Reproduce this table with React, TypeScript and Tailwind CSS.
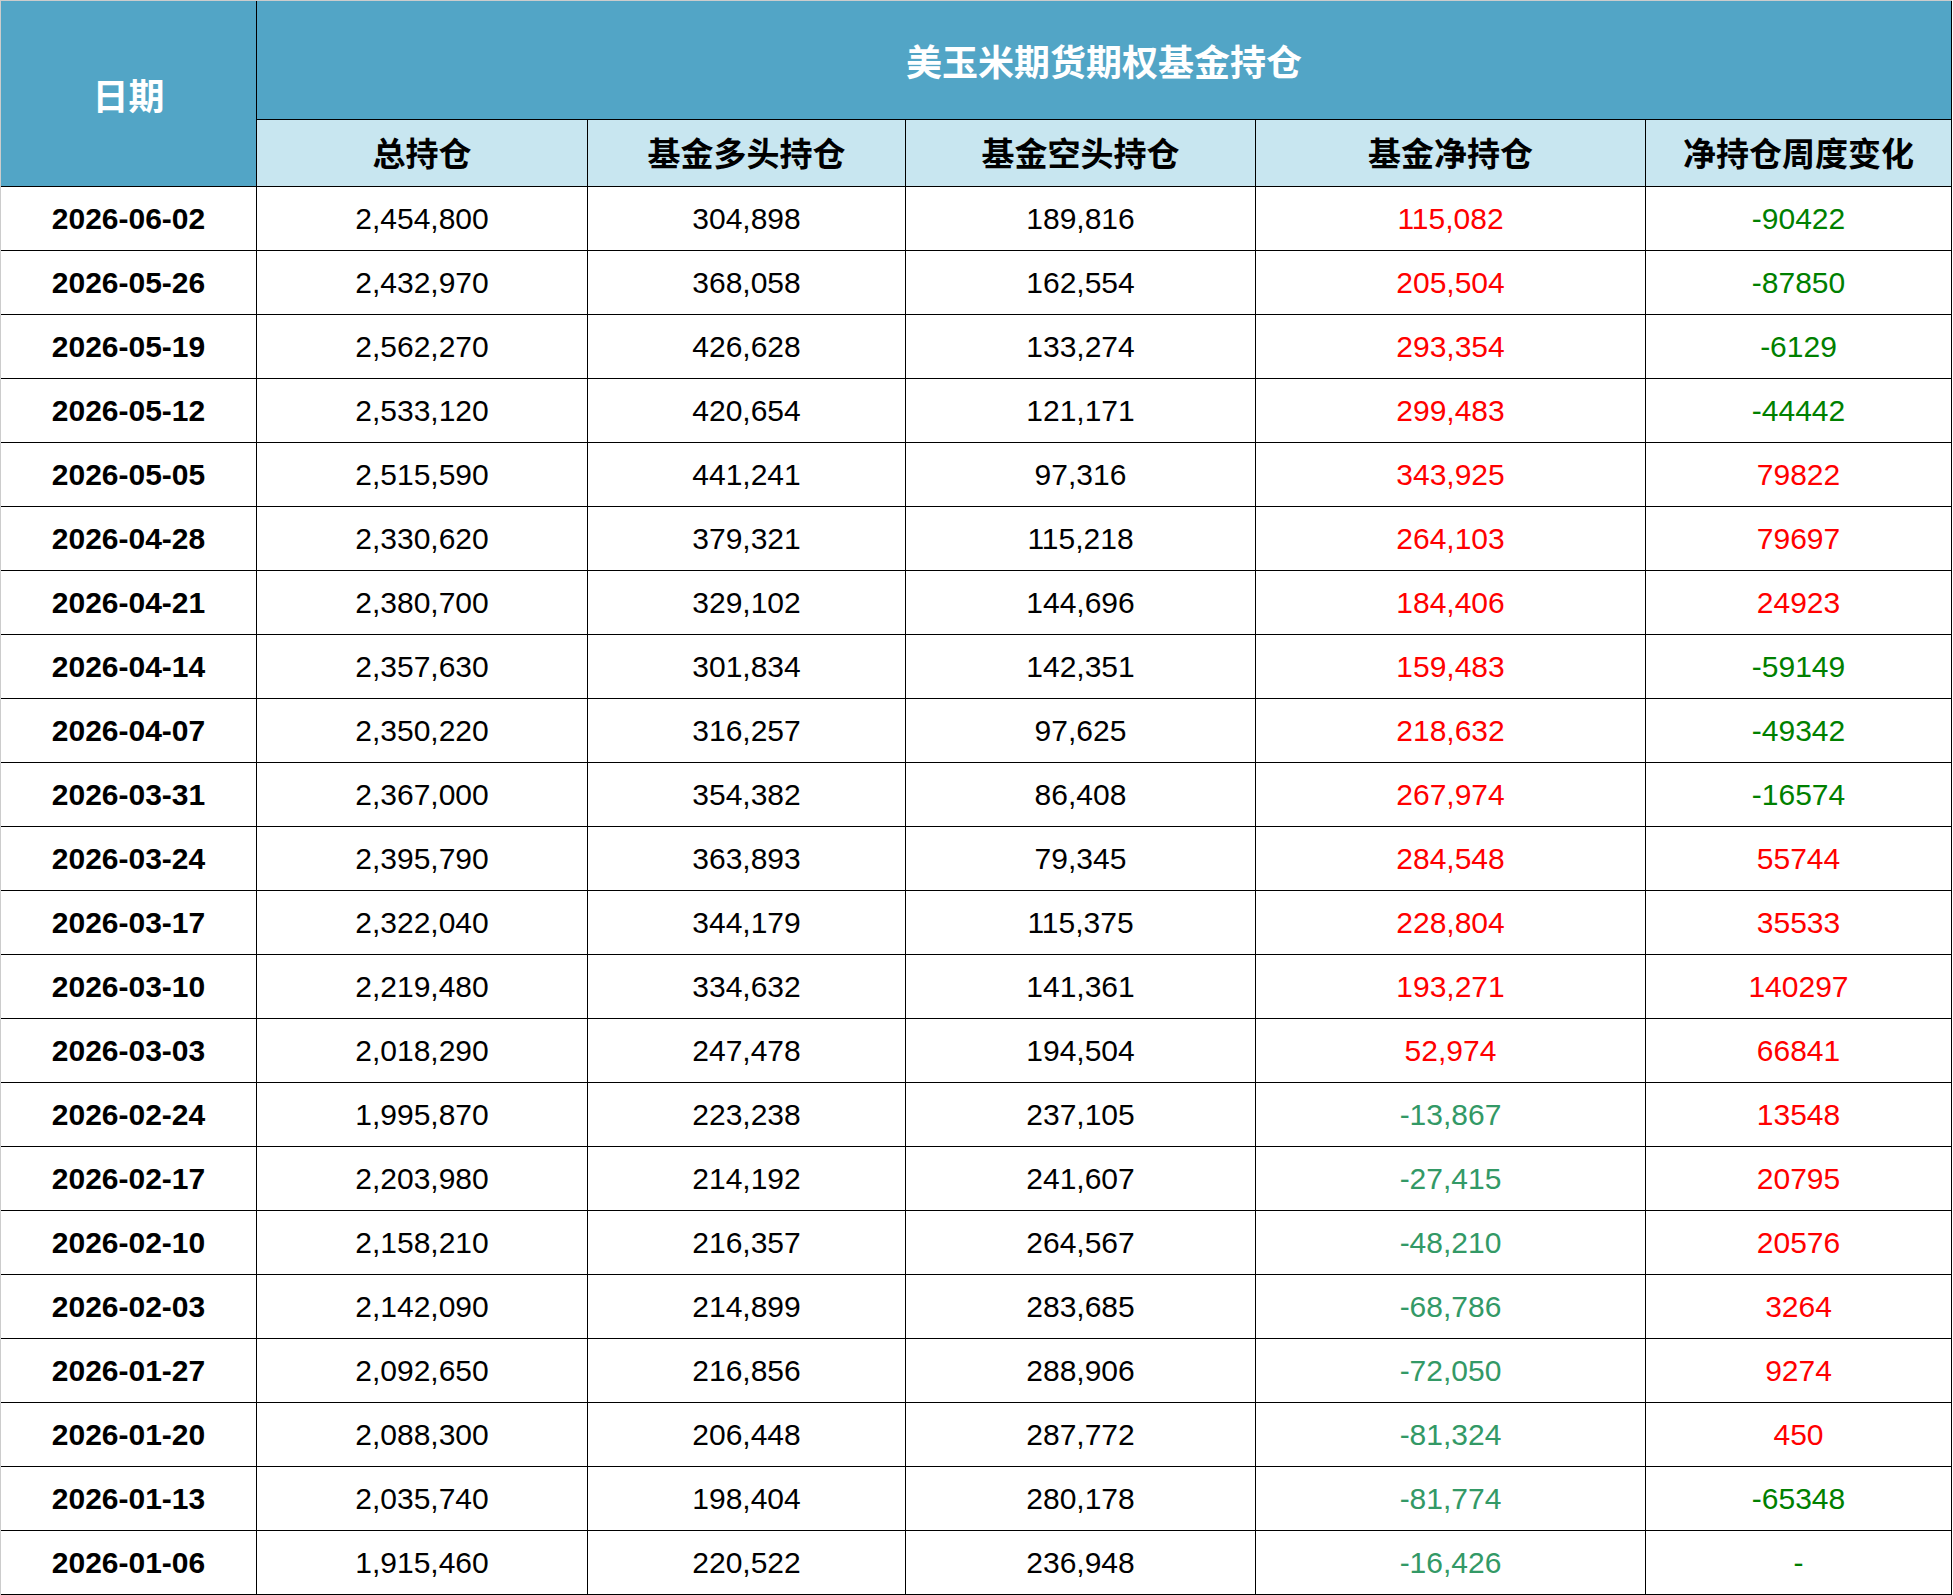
type Row = [string, string, string, string, string, string];

const rows: Row[] = [
  ['2026-06-02', '2,454,800', '304,898', '189,816', '115,082', '-90422'],
  ['2026-05-26', '2,432,970', '368,058', '162,554', '205,504', '-87850'],
  ['2026-05-19', '2,562,270', '426,628', '133,274', '293,354', '-6129'],
  ['2026-05-12', '2,533,120', '420,654', '121,171', '299,483', '-44442'],
  ['2026-05-05', '2,515,590', '441,241', '97,316', '343,925', '79822'],
  ['2026-04-28', '2,330,620', '379,321', '115,218', '264,103', '79697'],
  ['2026-04-21', '2,380,700', '329,102', '144,696', '184,406', '24923'],
  ['2026-04-14', '2,357,630', '301,834', '142,351', '159,483', '-59149'],
  ['2026-04-07', '2,350,220', '316,257', '97,625', '218,632', '-49342'],
  ['2026-03-31', '2,367,000', '354,382', '86,408', '267,974', '-16574'],
  ['2026-03-24', '2,395,790', '363,893', '79,345', '284,548', '55744'],
  ['2026-03-17', '2,322,040', '344,179', '115,375', '228,804', '35533'],
  ['2026-03-10', '2,219,480', '334,632', '141,361', '193,271', '140297'],
  ['2026-03-03', '2,018,290', '247,478', '194,504', '52,974', '66841'],
  ['2026-02-24', '1,995,870', '223,238', '237,105', '-13,867', '13548'],
  ['2026-02-17', '2,203,980', '214,192', '241,607', '-27,415', '20795'],
  ['2026-02-10', '2,158,210', '216,357', '264,567', '-48,210', '20576'],
  ['2026-02-03', '2,142,090', '214,899', '283,685', '-68,786', '3264'],
  ['2026-01-27', '2,092,650', '216,856', '288,906', '-72,050', '9274'],
  ['2026-01-20', '2,088,300', '206,448', '287,772', '-81,324', '450'],
  ['2026-01-13', '2,035,740', '198,404', '280,178', '-81,774', '-65348'],
  ['2026-01-06', '1,915,460', '220,522', '236,948', '-16,426', '-'],
];

const subHeaders = ['总持仓', '基金多头持仓', '基金空头持仓', '基金净持仓', '净持仓周度变化'];

const cell = 'flex items-center justify-center border-r border-b border-black';
const cjk = "font-['Noto_Sans_CJK_SC',sans-serif] font-bold";
const num = "font-['Liberation_Sans',Arial,sans-serif] text-[30px]";

export default function App() {
  return (
    <div className="min-h-screen bg-white">
      <div className="w-[1952px] border-t border-l border-[#cccccc]">
        <div className="grid grid-cols-[256px_331px_318px_350px_390px_306px] grid-rows-[119px_67px_repeat(22,64px)]">
          <div className={`${cell} ${cjk} row-span-2 bg-[#52a5c6] text-[36px] text-white`}>日期</div>
          <div className={`${cell} ${cjk} col-span-5 bg-[#52a5c6] text-[36px] text-white`}>
            美玉米期货期权基金持仓
          </div>
          {subHeaders.map((h) => (
            <div key={h} className={`${cell} ${cjk} bg-[#c8e6f0] text-[33px] text-black`}>
              {h}
            </div>
          ))}

          {rows.map((r) => {
            const net = r[4].startsWith('-') ? 'text-[#339966]' : 'text-[#ff0000]';
            const chg = r[5].startsWith('-') ? 'text-[#008000]' : 'text-[#ff0000]';
            return [
              <div key={r[0] + 'd'} className={`${cell} ${num} font-bold text-black`}>{r[0]}</div>,
              <div key={r[0] + 't'} className={`${cell} ${num} text-black`}>{r[1]}</div>,
              <div key={r[0] + 'l'} className={`${cell} ${num} text-black`}>{r[2]}</div>,
              <div key={r[0] + 's'} className={`${cell} ${num} text-black`}>{r[3]}</div>,
              <div key={r[0] + 'n'} className={`${cell} ${num} ${net}`}>{r[4]}</div>,
              <div key={r[0] + 'c'} className={`${cell} ${num} ${chg}`}>{r[5]}</div>,
            ];
          })}
        </div>
      </div>
    </div>
  );
}
